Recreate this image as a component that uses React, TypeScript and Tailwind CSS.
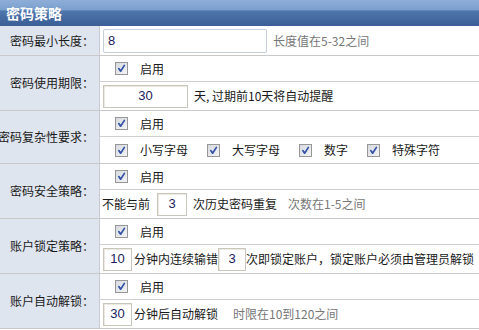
import { ReactNode } from 'react'

const Check = ({ label }: { label: string }) => (
  <span className="flex items-center">
    <span className="w-[13px] h-[13px] border border-[#979797] bg-[linear-gradient(135deg,#d6d9de,#f3f4f6)] flex items-center justify-center">
      <svg width="9" height="9" viewBox="0 0 9 9">
        <path d="M1.8 4.6 L3.6 7.2 L7.4 1.4" stroke="#3352a6" strokeWidth="1.7" fill="none" strokeLinecap="round" strokeLinejoin="round" />
      </svg>
    </span>
    <span className="ml-[12px]">{label}</span>
  </span>
)

const Box = ({ value, w, center }: { value: string; w: string; center?: boolean }) => (
  <span
    className={`${w} h-[23px] border border-[#c9c6bc] shadow-[inset_1px_1px_0_#ebe9e2] bg-white flex items-center font-['Liberation_Sans',sans-serif] text-[13px] text-[#1c1c5c] ${center ? 'justify-center' : 'pl-[5px]'}`}
  >
    {value}
  </span>
)

const Label = ({ text }: { text: string }) => (
  <div className="w-[100px] shrink-0 bg-[#dfe5ee] border-r border-[#c8ccd2] flex items-center justify-end pr-[5px] whitespace-nowrap overflow-hidden">
    <span className="shrink-0">{text}</span>
  </div>
)

const Row = ({ label, children }: { label: string; children: ReactNode }) => (
  <div className="flex border-b border-[#c9c9c9]">
    <Label text={label} />
    <div className="flex-1 flex flex-col">{children}</div>
  </div>
)

const CheckLine = ({ children }: { children: ReactNode }) => (
  <div className="h-[26px] border-b border-[#cfcfcf] flex items-center pl-[15px]">{children}</div>
)

const InputLine = ({ children }: { children: ReactNode }) => (
  <div className="h-[28px] flex items-center pl-[3px] whitespace-nowrap">{children}</div>
)

export default function App() {
  return (
    <div className="w-[479px] h-[330px] overflow-hidden bg-white font-['Noto_Sans_CJK_SC',sans-serif] text-[12px] leading-[14px] text-[#1a1a1a]">
      {/* header */}
      <div className="h-[26px] bg-[linear-gradient(#8eaed8_0%,#7a9fcd_38%,#4f76ad_42%,#3a5e95_100%)] flex items-center pl-[6px]">
        <span className="text-white font-bold text-[14px]">密码策略</span>
      </div>

      <Row label="密码最小长度：">
        <div className="h-[29px] flex items-center pl-[3px]">
          <span className="w-[164px] h-[24px] border border-[#c5cdd8] rounded-[2px] bg-white flex items-center pl-[4px] font-['Liberation_Sans',sans-serif] text-[13px] text-[#1c1c5c]">
            8
          </span>
          <span className="ml-[6px] text-[#777]">长度值在5-32之间</span>
        </div>
      </Row>

      <Row label="密码使用期限：">
        <CheckLine>
          <Check label="启用" />
        </CheckLine>
        <InputLine>
          <Box value="30" w="w-[85px]" center />
          <span className="ml-[6px]">天, 过期前10天将自动提醒</span>
        </InputLine>
      </Row>

      <Row label="密码复杂性要求：">
        <CheckLine>
          <Check label="启用" />
        </CheckLine>
        <div className="h-[26px] flex items-center pl-[15px] gap-[19px]">
          <Check label="小写字母" />
          <Check label="大写字母" />
          <Check label="数字" />
          <Check label="特殊字符" />
        </div>
      </Row>

      <Row label="密码安全策略：">
        <CheckLine>
          <Check label="启用" />
        </CheckLine>
        <div className="h-[28px] flex items-center pl-[2px] whitespace-nowrap">
          <span>不能与前</span>
          <span className="ml-[7px]">
            <Box value="3" w="w-[30px]" center />
          </span>
          <span className="ml-[6px]">次历史密码重复</span>
          <span className="ml-[11px] text-[#777]">次数在1-5之间</span>
        </div>
      </Row>

      <Row label="账户锁定策略：">
        <CheckLine>
          <Check label="启用" />
        </CheckLine>
        <InputLine>
          <Box value="10" w="w-[29px]" center />
          <span className="ml-[2px]">分钟内连续输错</span>
          <Box value="3" w="w-[28px]" center />
          <span>次即锁定账户，锁定账户必须由管理员解锁</span>
        </InputLine>
      </Row>

      <Row label="账户自动解锁：">
        <CheckLine>
          <Check label="启用" />
        </CheckLine>
        <InputLine>
          <Box value="30" w="w-[29px]" center />
          <span className="ml-[2px]">分钟后自动解锁</span>
          <span className="ml-[15px] text-[#777]">时限在10到120之间</span>
        </InputLine>
      </Row>
    </div>
  )
}
